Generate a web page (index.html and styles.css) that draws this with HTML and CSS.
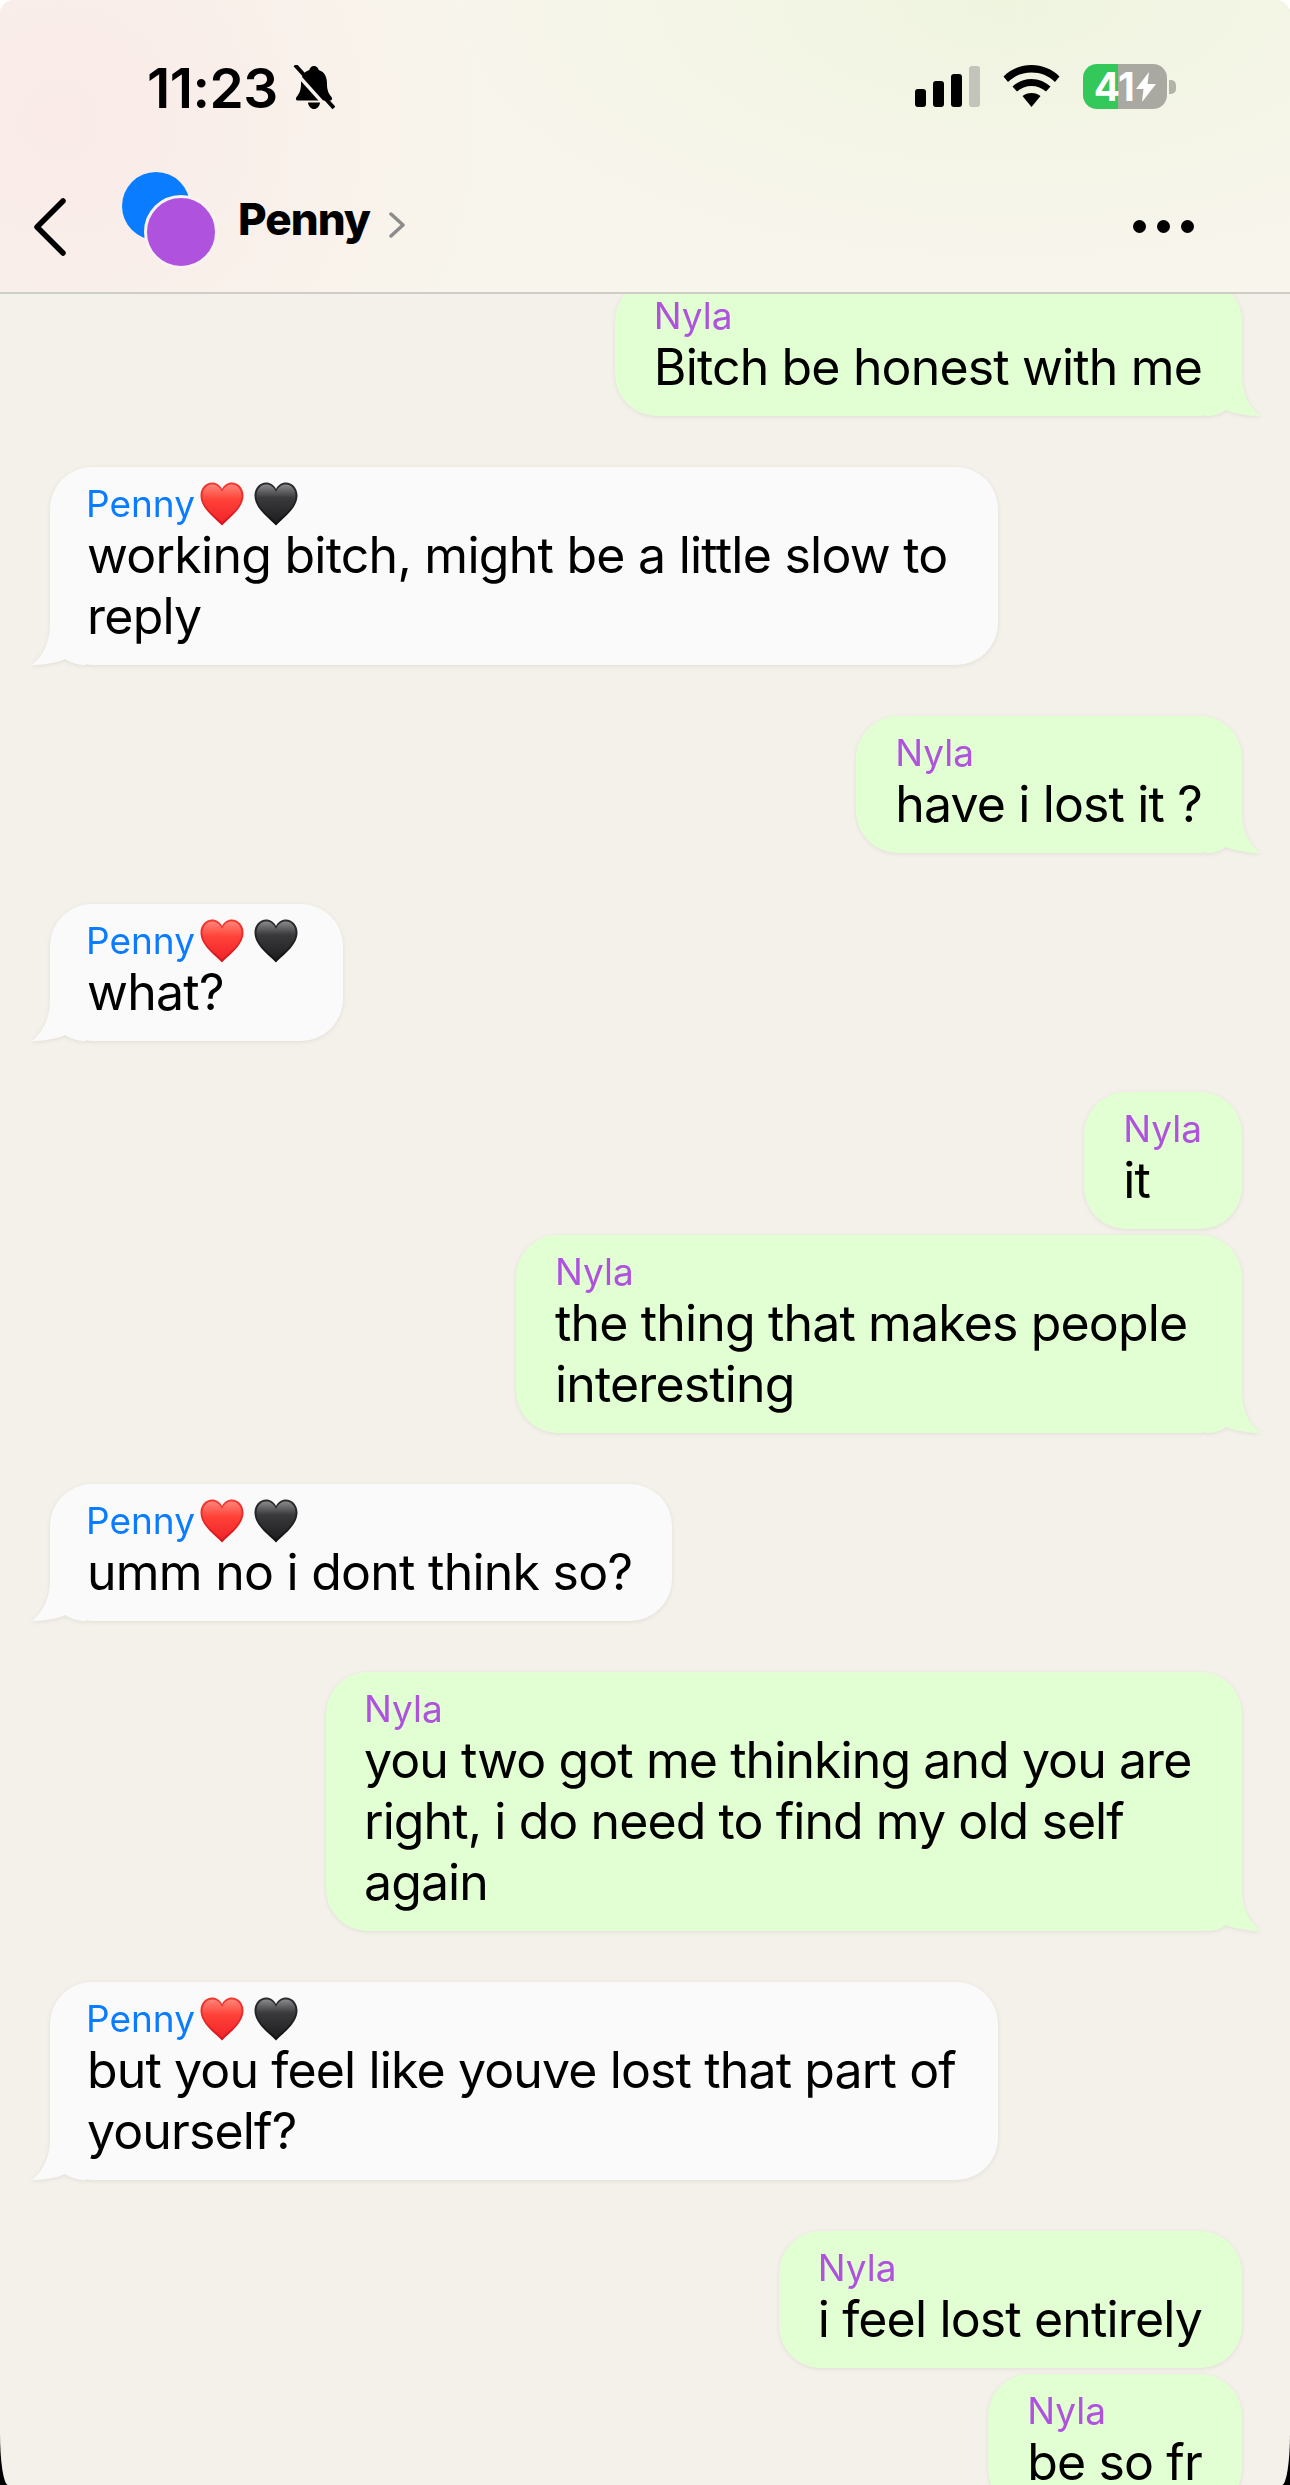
FILE: index.html
```html
<!DOCTYPE html>
<html lang="en">
<head>
<meta charset="utf-8">
<title>Penny</title>
<link rel="stylesheet" href="styles.css">
</head>
<body>
<svg class="defs" width="0" height="0" aria-hidden="true">
  <defs>
    <linearGradient id="red" x1="0" y1="0" x2="0" y2="1"><stop offset="0" stop-color="#f23a34"/><stop offset="1" stop-color="#d8141c"/></linearGradient>
    <linearGradient id="red2" x1="0" y1="0" x2="0" y2="1"><stop offset="0" stop-color="#ff8478"/><stop offset=".4" stop-color="#ff4238"/><stop offset="1" stop-color="#f0242a"/></linearGradient>
    <linearGradient id="blk" x1="0" y1="0" x2="0" y2="1"><stop offset="0" stop-color="#2e2e30"/><stop offset="1" stop-color="#111112"/></linearGradient>
    <linearGradient id="blk2" x1="0" y1="0" x2="0" y2="1"><stop offset="0" stop-color="#8a8a8e"/><stop offset=".35" stop-color="#3a3a3c"/><stop offset="1" stop-color="#1e1e20"/></linearGradient>
    <symbol id="heart-red" viewBox="0 0 44 44"><path fill="url(#red)" d="M22 43.500C15 36 1 27 .5 14 .2 6 6 .5 12 .5 16.500.5 20 3 22 7 24 3 27.500.5 32 .5 38 .5 43.800 6 43.500 14 43 27 29 36 22 43.500Z"/><path fill="url(#red2)" d="M22 40.500C16 34 2.500 26 2.500 14 2.500 7 7 2.500 12 2.500 16.500 2.500 20 5 22 10 24 5 27.500 2.500 32 2.500 37 2.500 41.500 7 41.500 14 41.500 26 28 34 22 40.500Z"/></symbol>
    <symbol id="heart-black" viewBox="0 0 44 44"><path fill="url(#blk)" d="M22 43.500C15 36 1 27 .5 14 .2 6 6 .5 12 .5 16.500.5 20 3 22 7 24 3 27.500.5 32 .5 38 .5 43.800 6 43.500 14 43 27 29 36 22 43.500Z"/><path fill="url(#blk2)" d="M22 40.500C16 34 2.500 26 2.500 14 2.500 7 7 2.500 12 2.500 16.500 2.500 20 5 22 10 24 5 27.500 2.500 32 2.500 37 2.500 41.500 7 41.500 14 41.500 26 28 34 22 40.500Z"/></symbol>
  </defs>
</svg>
<main class="phone">
  <header class="top">
    <div class="status">
      <div class="clock">
        <span class="time">11:23</span>
        <svg class="bell" viewBox="0 0 42 45"><path d="M21 1c2.500 0 4.300 1.700 4.700 4C32 7 34 12.500 34 19c0 6 1.500 9.500 4.500 13 1.200 1.500.6 3.500-1.200 3.500H4.700c-1.800 0-2.400-2-1.200-3.500C6.500 28.500 8 25 8 19c0-6.500 2-12 8.300-14C16.700 2.700 18.500 1 21 1Z"/><path d="M15 37.500h12c-.5 4-3 6.500-6 6.500s-5.500-2.500-6-6.500Z"/><path class="bell-gap" d="M-1 3.500 39 48"/><path class="bell-slash" d="M2 0 41 43"/></svg>
      </div>
      <div class="indicators">
        <svg class="signal" viewBox="0 0 65 41"><rect x="0" y="23" width="11" height="18" rx="3"/><rect x="18" y="15" width="11" height="26" rx="3"/><rect x="36" y="8" width="11" height="33" rx="3"/><rect class="dim" x="54" y="0" width="11" height="41" rx="3"/></svg>
        <svg class="wifi" viewBox="0 0 57 42"><path d="M28.500 0C39 0 49 4 56.500 11.500L52 17C45.500 10.500 37.500 7.500 28.500 7.500S11.500 10.500 5 17L.5 11.500C8 4 18 0 28.500 0Z"/><path d="M28.500 14C36 14 42.500 17 47.500 21.500L43 26.500C39 23 34 21 28.500 21S18 23 14 26.500L9.500 21.500C14.500 17 21 14 28.500 14Z"/><path d="M28.500 28C32 28 35 29 37.500 31L28.500 42 19.500 31C22 29 25 28 28.500 28Z"/></svg>
        <div class="battery">
          <div class="batt-body"><span class="batt-num">41</span><svg class="bolt" viewBox="0 0 20 30"><path d="M13 0 0 17H7.500L6 30 20 12H11.500Z"/></svg></div>
          <span class="batt-cap"></span>
        </div>
      </div>
    </div>
    <div class="nav">
      <svg class="back" viewBox="0 0 32 58"><path d="M29 3 3 29 29 55"/></svg>
      <div class="avatars"><span class="av av-blue"></span><span class="av av-purple"></span></div>
      <span class="title">Penny</span>
      <svg class="chev" viewBox="0 0 16 26"><path d="M2 2 14 13 2 24"/></svg>
      <div class="more"><i></i><i></i><i></i></div>
    </div>
  </header>
  <section class="chat">
    <div class="msg out first tail"><div class="name">Nyla</div><div class="text">Bitch be honest with me</div></div>
    <div class="msg in wide tail"><div class="name">Penny<svg class="emoji first-heart"><use href="#heart-red"/></svg><svg class="emoji"><use href="#heart-black"/></svg></div><div class="text">working bitch, might be a little slow to<br>reply</div></div>
    <div class="msg out tail"><div class="name">Nyla</div><div class="text">have i lost it ?</div></div>
    <div class="msg in tail"><div class="name">Penny<svg class="emoji first-heart"><use href="#heart-red"/></svg><svg class="emoji"><use href="#heart-black"/></svg></div><div class="text">what?</div></div>
    <div class="msg out"><div class="name">Nyla</div><div class="text">it</div></div>
    <div class="msg out close tail w-two"><div class="name">Nyla</div><div class="text">the thing that makes people<br>interesting</div></div>
    <div class="msg in tail"><div class="name">Penny<svg class="emoji first-heart"><use href="#heart-red"/></svg><svg class="emoji"><use href="#heart-black"/></svg></div><div class="text">umm no i dont think so?</div></div>
    <div class="msg out tail w-three"><div class="name">Nyla</div><div class="text tight">you two got me thinking and you are<br>right, i do need to find my old self<br>again</div></div>
    <div class="msg in wide tail"><div class="name">Penny<svg class="emoji first-heart"><use href="#heart-red"/></svg><svg class="emoji"><use href="#heart-black"/></svg></div><div class="text snug">but you feel like youve lost that part of<br>yourself?</div></div>
    <div class="msg out"><div class="name">Nyla</div><div class="text">i feel lost entirely</div></div>
    <div class="msg out close"><div class="name">Nyla</div><div class="text">be so fr</div></div>
  </section>
</main>
</body>
</html>
```
FILE: styles.css
```css
* { box-sizing: border-box; }
html, body { margin: 0; padding: 0; }
body { background: linear-gradient(#fff 50%, #000 50%); }
.defs { position: absolute; }
.phone {
  width: 1290px; height: 2485px; overflow: hidden;
  border-radius: 14px 14px 8px 8px / 14px 14px 52px 52px;
  background: #f4f1eb;
  font-family: Inter, "Liberation Sans", sans-serif;
  color: #000;
  display: flex; flex-direction: column;
}
.top {
  height: 294px; flex: none; position: relative; z-index: 2;
  border-bottom: 2px solid #cfcdc8;
  background:
    radial-gradient(560px 260px at 1010px 0, rgba(232,244,214,.6), rgba(232,244,214,0)),
    radial-gradient(420px 420px at 60px 120px, rgba(250,234,232,.95), rgba(250,234,232,0)),
    #f8f5ec;
}
.status { height: 150px; display: flex; justify-content: space-between; padding: 65px 114px 0 147px; }
.clock { display: flex; align-items: flex-start; gap: 15px; }
.time { font-size: 55px; font-weight: 600; line-height: 46px; letter-spacing: -.5px; }
.bell { width: 42px; height: 45px; }
.bell-gap { fill: none; stroke: #f8f2ec; stroke-width: 3.500; }
.bell-slash { fill: none; stroke: #000; stroke-width: 4; }
.indicators { display: flex; align-items: flex-start; }
.signal { width: 65px; height: 41px; margin-top: 1px; }
.dim { fill: #c4c4bc; }
.wifi { width: 57px; height: 42px; margin: 0 0 0 23px; }
.battery { display: flex; align-items: center; margin: -1px 0 0 23px; }
.batt-body {
  width: 84px; height: 45px; border-radius: 14px;
  background: linear-gradient(90deg, #34c759 0 35px, #a9a9a2 35px);
  display: flex; align-items: center; justify-content: center; gap: 2px;
  color: #fff;
}
.batt-num { font-size: 39px; font-weight: 700; letter-spacing: -.5px; line-height: 45px; }
.bolt { width: 20px; height: 30px; fill: #fff; }
.batt-cap { width: 7px; height: 14px; background: #b3b3ac; border-radius: 0 5px 5px 0; margin-left: 2px; }

.nav { height: 142px; display: flex; align-items: flex-start; position: relative; padding-left: 34px; }
.back { width: 32px; height: 58px; margin-top: 48px; fill: none; stroke: #000; stroke-width: 5.500; stroke-linecap: round; stroke-linejoin: round; flex: none; }
.avatars { position: relative; width: 96px; height: 96px; margin: 22px 0 0 56px; flex: none; }
.av { position: absolute; border-radius: 50%; display: block; }
.av-blue { left: 0; top: 0; width: 68px; height: 68px; background: #0a7cff; }
.av-purple { left: 22px; top: 23px; width: 74px; height: 74px; background: #af52de; border: 3px solid #f8f2f0; }
.title { font-size: 44px; font-weight: 800; line-height: 50px; margin: 44px 0 0 20px; letter-spacing: -1px; }
.chev { width: 16px; height: 26px; margin: 62px 0 0 19px; fill: none; stroke: #8c8c8c; stroke-width: 3.500; stroke-linecap: round; stroke-linejoin: round; flex: none; }
.more { position: absolute; right: 96px; top: 70px; display: flex; gap: 11px; }
.more i { width: 13px; height: 13px; border-radius: 50%; background: #000; display: block; }

.chat { flex: 1; min-height: 0; overflow: hidden; display: flex; flex-direction: column; padding: 0 48px 0 50px; }
.msg {
  position: relative; width: fit-content; flex: none;
  padding: 13px 40px 14px 39px; margin-top: 51px;
  border-radius: 42px;
  filter: drop-shadow(0 1px 2px rgba(0,0,0,.08));
}
.msg.first { margin-top: -15px; }
.msg.close { margin-top: 6px; }
.out { align-self: flex-end; background: #e2fed3; }
.out .text { letter-spacing: -.85px; }
.in { align-self: flex-start; background: #fafafa; padding-left: 37px; }
.wide { width: 948px; }
.w-two { width: 726px; }
.w-three { width: 916px; padding-left: 38px; }
.name { font-size: 37px; line-height: 47px; height: 49px; font-weight: 400; display: flex; align-items: flex-start; white-space: nowrap; }
.out .name { color: #af52de; }
.in .name { color: #0a7cff; margin-left: -1px; }
.emoji { width: 44px; height: 44px; flex: none; margin: 2px 0 0 10px; }
.emoji.first-heart { margin-left: 5px; }
.emoji:last-child { margin-right: 5px; }
.text { font-size: 50px; line-height: 61px; letter-spacing: -.75px; white-space: nowrap; position: relative; top: -4px; }
.out .text.tight { letter-spacing: -.92px; }
.text.snug { letter-spacing: -.87px; }
.tail::after {
  content: ""; position: absolute; bottom: 0; width: 54px; height: 60px;
}
.out.tail::after {
  right: -18px; background: #e2fed3;
  clip-path: path("M0 60C8 60 14 58 20 54C30 58 44 60 54 60C42 50 36 36 36 20V0H0Z");
}
.in.tail::after {
  left: -18px; background: #fafafa;
  clip-path: path("M54 60C46 60 40 58 33 54C24 58 10 60 0 60C12 50 18 36 18 20V0H54Z");
}
```
